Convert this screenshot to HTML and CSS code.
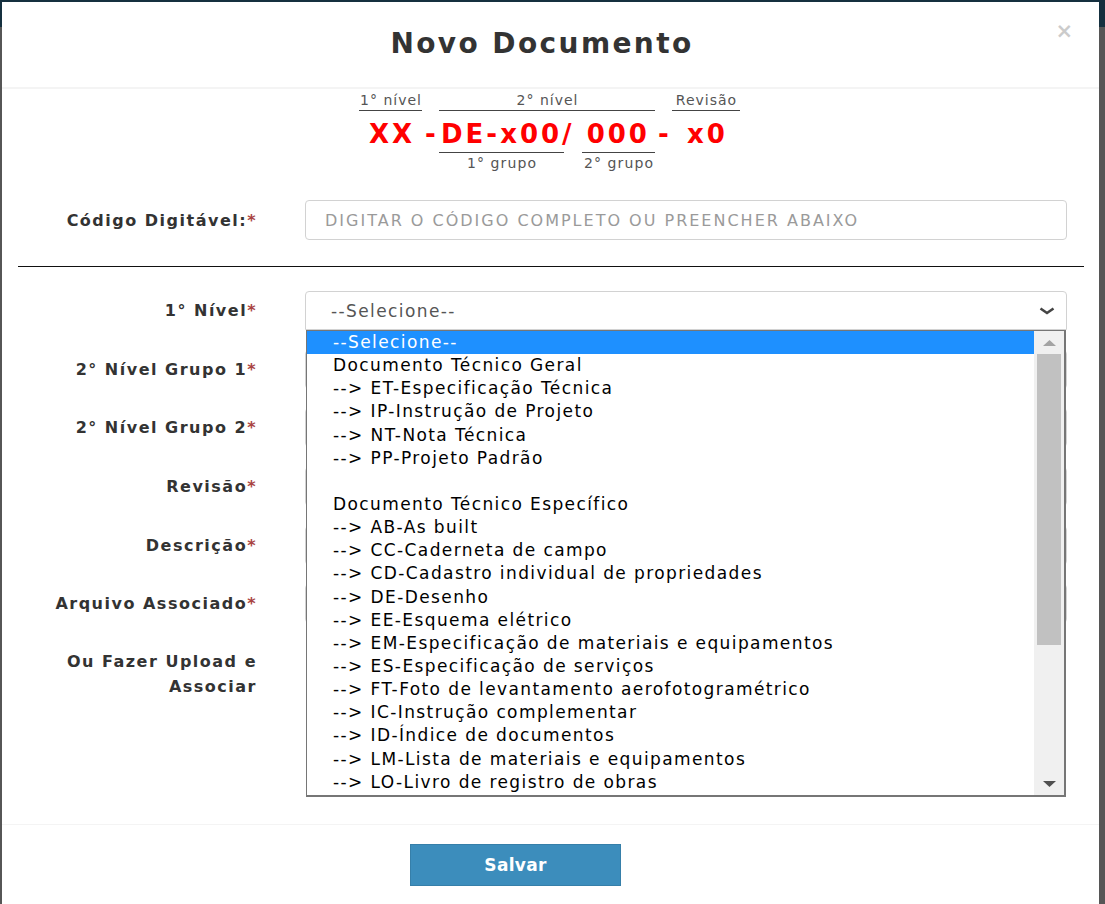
FILE: index.html
```html
<!DOCTYPE html>
<html lang="pt-BR">
<head>
<meta charset="utf-8">
<title>Novo Documento</title>
<link rel="stylesheet" href="styles.css">
</head>
<body>
<div class="modal">
  <div class="modal-header">
    <h4 class="modal-title">Novo Documento</h4>
    <span class="close">×</span>
  </div>
  <div class="modal-body">
    <div class="code">
      <div class="seg seg-a">
        <div class="cap">1° nível</div>
        <div class="big">XX</div>
      </div>
      <div class="seg seg-sep">
        <div class="cap cap-empty"></div>
        <div class="big">-</div>
      </div>
      <div class="seg seg-b">
        <div class="cap">2° nível</div>
        <div class="big">DE-x00/ 000</div>
        <div class="subs">
          <div class="sub sub1">1° grupo</div>
          <div class="sub sub2">2° grupo</div>
        </div>
      </div>
      <div class="seg seg-sep">
        <div class="cap cap-empty"></div>
        <div class="big">-</div>
      </div>
      <div class="seg seg-c">
        <div class="cap">Revisão</div>
        <div class="big">x0</div>
      </div>
    </div>

    <div class="form-row first">
      <label class="lbl">Código Digitável:<span class="req">*</span></label>
      <div class="ctl"><input class="input input-code" type="text" placeholder="DIGITAR O CÓDIGO COMPLETO OU PREENCHER ABAIXO"></div>
    </div>

    <hr class="divider">

    <div class="form-row">
      <label class="lbl">1° Nível<span class="req">*</span></label>
      <div class="ctl select-wrap">
        <div class="select">
          <span>--Selecione--</span>
          <svg class="chev" width="16" height="8" viewBox="0 0 16 8"><polyline points="1.5,1.5 8,6 14.5,1.5" fill="none" stroke="#444" stroke-width="2.6"/></svg>
        </div>
        <div class="dropdown">
          <ul class="options">
            <li class="selected">--Selecione--</li>
            <li>Documento Técnico Geral</li>
            <li>--&gt; ET-Especificação Técnica</li>
            <li>--&gt; IP-Instrução de Projeto</li>
            <li>--&gt; NT-Nota Técnica</li>
            <li>--&gt; PP-Projeto Padrão</li>
            <li></li>
            <li>Documento Técnico Específico</li>
            <li>--&gt; AB-As built</li>
            <li>--&gt; CC-Caderneta de campo</li>
            <li>--&gt; CD-Cadastro individual de propriedades</li>
            <li>--&gt; DE-Desenho</li>
            <li>--&gt; EE-Esquema elétrico</li>
            <li>--&gt; EM-Especificação de materiais e equipamentos</li>
            <li>--&gt; ES-Especificação de serviços</li>
            <li>--&gt; FT-Foto de levantamento aerofotogramétrico</li>
            <li>--&gt; IC-Instrução complementar</li>
            <li>--&gt; ID-Índice de documentos</li>
            <li>--&gt; LM-Lista de materiais e equipamentos</li>
            <li>--&gt; LO-Livro de registro de obras</li>
          </ul>
          <div class="scrollbar">
            <div class="sb-btn"><svg width="13" height="6" viewBox="0 0 13 6"><polygon points="0,6 6.5,0 13,6" fill="#a3a3a3"/></svg></div>
            <div class="sb-thumb"></div>
            <div class="sb-track"></div>
            <div class="sb-btn"><svg width="13" height="6" viewBox="0 0 13 6"><polygon points="0,0 13,0 6.5,6" fill="#505050"/></svg></div>
          </div>
        </div>
      </div>
    </div>

    <div class="form-row">
      <label class="lbl">2° Nível Grupo 1<span class="req">*</span></label>
      <div class="ctl"><div class="input"></div></div>
    </div>
    <div class="form-row">
      <label class="lbl">2° Nível Grupo 2<span class="req">*</span></label>
      <div class="ctl"><div class="input"></div></div>
    </div>
    <div class="form-row">
      <label class="lbl">Revisão<span class="req">*</span></label>
      <div class="ctl"><div class="input"></div></div>
    </div>
    <div class="form-row">
      <label class="lbl">Descrição<span class="req">*</span></label>
      <div class="ctl"><div class="input"></div></div>
    </div>
    <div class="form-row">
      <label class="lbl">Arquivo Associado<span class="req">*</span></label>
      <div class="ctl"><div class="input"></div></div>
    </div>
    <div class="form-row upload">
      <label class="lbl">Ou Fazer Upload e Associar</label>
      <div class="ctl"></div>
    </div>
  </div>
  <div class="modal-footer">
    <button class="btn" type="button">Salvar</button>
  </div>
</div>
</body>
</html>
```
FILE: styles.css
```css
* { box-sizing: border-box; }

html, body {
  margin: 0;
  height: 100%;
}

body {
  background: linear-gradient(#15303f 0, #15303f 27px, #565656 27px);
  font-family: "DejaVu Sans", sans-serif;
  overflow: hidden;
}

.modal {
  margin: 2px 0 0 2px;
  width: 1097px;
  background: #fff;
}

/* header */
.modal-header {
  position: relative;
  height: 87px;
  border-bottom: 2px solid #f4f4f4;
  display: flex;
  align-items: center;
  justify-content: center;
  padding: 0 17px 2px 0;
}

.modal-title {
  margin: 0;
  font-size: 28px;
  line-height: 1;
  font-weight: bold;
  color: #333;
  letter-spacing: 2.4px;
}

.close {
  position: absolute;
  right: 26px;
  top: 19px;
  font-size: 21px;
  font-weight: bold;
  line-height: 1;
  color: #000;
  opacity: 0.2;
}

/* body */
.modal-body {
  padding: 1px 15px 123px 16px;
}

.code {
  display: flex;
  justify-content: center;
  padding-right: 3px;
}

.seg-a { width: 63px; }
.seg-sep { width: 17px; }
.seg-b { width: 216px; }
.seg-c { width: 68px; }

.cap {
  height: 21px;
  line-height: 20px;
  border-bottom: 1px solid #444;
  text-align: center;
  font-size: 14px;
  color: #555;
  letter-spacing: 1px;
  padding-left: 1px;
  white-space: nowrap;
}

.cap-empty { border-bottom: 0; }

.big {
  height: 38px;
  padding-top: 8px;
  padding-left: 3px;
  line-height: 30px;
  font-size: 26px;
  font-weight: bold;
  color: #f00;
  text-align: center;
  letter-spacing: 3px;
  white-space: pre;
}

.seg-b .big {
  text-align: left;
  padding-left: 2px;
  letter-spacing: 3px;
}

.subs {
  display: flex;
  justify-content: space-between;
  margin-top: 3px;
}

.sub {
  border-top: 1px solid #444;
  line-height: 20px;
  text-align: center;
  font-size: 14px;
  color: #555;
  letter-spacing: 1.1px;
  padding-left: 1px;
  white-space: nowrap;
}

.sub1 { width: 125px; }
.sub2 { width: 73px; }

/* form */
.form-row {
  display: grid;
  grid-template-columns: 239px 762px;
  column-gap: 48px;
  align-items: center;
  margin-bottom: 19.7px;
}

.form-row.first {
  margin-top: 27px;
  margin-bottom: 0;
}

.form-row:last-child { margin-bottom: 0; }

.lbl {
  text-align: right;
  font-size: 16px;
  font-weight: bold;
  color: #333;
  letter-spacing: 1.5px;
}

.req { color: #a94442; }

.ctl { position: relative; }

.input {
  display: block;
  width: 100%;
  height: 39px;
  border: 1px solid #d2d2d2;
  border-radius: 4px;
  background: #fff;
}

.input-code {
  height: 40px;
  padding: 0 0 0 19px;
  font-family: "DejaVu Sans", sans-serif;
  font-size: 16px;
  letter-spacing: 2px;
  color: #555;
  outline: none;
}

.input-code::placeholder { color: #9a9a9a; }

.divider {
  margin: 26px 0 24px;
  border: 0;
  border-top: 1px solid #111;
  height: 0;
}

.select {
  height: 39px;
  border: 1px solid #d2d2d2;
  border-radius: 4px 4px 0 0;
  display: flex;
  align-items: center;
  justify-content: space-between;
  padding: 0 11px 0 25px;
  font-size: 17px;
  letter-spacing: 1.4px;
  color: #555;
}

.chev { display: block; margin-top: 1px; }

.dropdown {
  position: absolute;
  top: 39px;
  left: 1px;
  width: 760px;
  height: 467px;
  border: 1px solid #767676;
  border-right-width: 2px;
  border-bottom-width: 2px;
  background: #fff;
  display: flex;
  z-index: 5;
}

.options {
  flex: 1;
  margin: 0;
  padding: 0;
  list-style: none;
  overflow: hidden;
}

.options li {
  height: 23.15px;
  line-height: 23.15px;
  padding-left: 26px;
  font-size: 17px;
  letter-spacing: 1.4px;
  color: #000;
  white-space: pre;
}

.options li.selected {
  background: #1e90ff;
  color: #fff;
}

.scrollbar {
  width: 30px;
  background: #f0f0f0;
  display: flex;
  flex-direction: column;
}

.sb-btn {
  height: 23px;
  display: flex;
  align-items: center;
  justify-content: center;
}

.sb-btn svg { display: block; }

.sb-thumb {
  height: 291px;
  margin: 0 3px;
  background: #c1c1c1;
}

.sb-track { flex: 1; }

.upload { align-items: start; }

.upload .lbl {
  padding-top: 6px;
  line-height: 25px;
}

.upload .ctl { height: 58px; }

/* footer */
.modal-footer {
  border-top: 1px solid #f4f4f4;
  padding: 19px 15px 20px 408px;
}

.btn {
  display: block;
  width: 211px;
  height: 42px;
  background: #3c8dbc;
  border: 1px solid #367fa9;
  border-radius: 0;
  color: #fff;
  font-family: "DejaVu Sans", sans-serif;
  font-size: 17px;
  font-weight: bold;
  letter-spacing: 0.3px;
  padding: 0;
}
```
